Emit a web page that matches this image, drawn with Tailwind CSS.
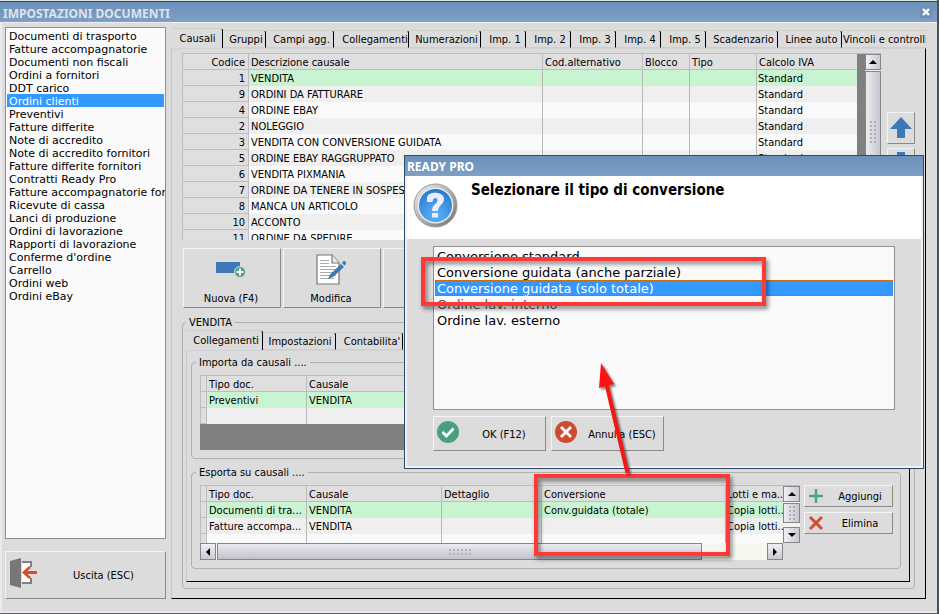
<!DOCTYPE html>
<html lang="it">
<head>
  <meta charset="UTF-8" />
  <meta name="viewport" content="width=device-width, initial-scale=1.0" />
  <title>Impostazioni documenti</title>
  <script src="https://cdn.jsdelivr.net/npm/@tailwindcss/browser@4"></script>
</head>
<body class="relative bg-[#dcdcdc] font-['DejaVu_Sans_Condensed','DejaVu_Sans',sans-serif] text-[11px] leading-4 text-black overflow-x-hidden">

  <!-- Finestra principale -->
  <div class="h-0.5 bg-[#dfe3e0] border-b border-[#34495c]"></div>
  <header class="h-5 px-[3px] flex items-center justify-between bg-linear-to-b from-[#6b90ba] to-[#7f9fc5]">
    <h1 class="pt-1 font-['Noto_Sans',sans-serif] font-bold text-[12px] text-[#dfe3ea]">IMPOSTAZIONI DOCUMENTI</h1>
    <button aria-label="Chiudi" class="size-3 mr-1 flex items-center justify-center bg-[#6f8fb5]">
      <svg class="size-2" viewBox="0 0 8 8"><path d="M1 1l6 6M7 1l-6 6" stroke="#fff" stroke-width="2.4" /></svg>
    </button>
  </header>

  <main class="flex gap-[5px] pl-[3px] pr-[11px] pb-3 border-t border-t-[#f2f2f2] border-x-2 border-b-2 border-x-[#ebebee] border-b-[#ebebee]">

    <!-- Tipi di documento -->
    <aside class="w-[161px] shrink-0 pt-1 flex flex-col gap-3">
      <ul id="documenti" role="listbox" aria-label="Documenti" class="flex-1 pt-px px-px overflow-hidden bg-[#fafafa] border border-[#8f8f8f] font-['DejaVu_Sans',sans-serif] leading-[13px] whitespace-nowrap"></ul>
      <button class="h-12 flex items-center pl-1 bg-[#dcdcdc] border border-t-[#f4f4f4] border-l-[#f4f4f4] border-r-[#8a8a8a] border-b-[#8a8a8a]">
        <svg class="w-7 h-8 -mt-1" viewBox="0 0 28 32">
          <path d="M12 5h9v5M12 26h9v-5" fill="none" stroke="#808080" stroke-width="2" />
          <path d="M12 6h8v19h-8z" fill="#fff" />
          <path d="M0 4l11-3v30L0 28z" fill="#777" />
          <path d="M27 15.500H15M20 10l-6 5.500 6 5.500" fill="none" stroke="#d24e32" stroke-width="2.800" />
        </svg>
        <span class="flex-1 pt-0.5 pl-1 text-center">Uscita (ESC)</span>
      </button>
    </aside>

    <section class="flex-1 min-w-0 pt-[5px]">
      <!-- Schede -->
      <div role="tablist" class="h-5 flex items-end overflow-hidden whitespace-nowrap">
        <button role="tab" aria-selected="true" class="w-[52px] h-5 pt-px pl-0.5 shrink-0 border-t border-t-[#cfcfcf] border-r border-r-black rounded-t-[3px]">Causali</button>
        <button role="tab" class="w-[43px] h-[18px] pt-px pl-1 shrink-0 border-y border-y-[#cfcfcf] border-r border-r-black rounded-tr-[3px]">Gruppi</button>
        <button role="tab" class="w-[68px] h-[18px] pt-px pl-1 shrink-0 border-y border-y-[#cfcfcf] border-r border-r-black rounded-tr-[3px]">Campi agg.</button>
        <button role="tab" class="w-[75px] h-[18px] pt-px pl-2 shrink-0 border-y border-y-[#cfcfcf] border-r border-r-black rounded-tr-[3px]">Collegamenti</button>
        <button role="tab" class="w-[72px] h-[18px] pt-px pl-1 shrink-0 border-y border-y-[#cfcfcf] border-r border-r-black rounded-tr-[3px]">Numerazioni</button>
        <button role="tab" class="w-[45px] h-[18px] pt-px pl-1 shrink-0 border-y border-y-[#cfcfcf] border-r border-r-black rounded-tr-[3px]">Imp. 1</button>
        <button role="tab" class="w-[45px] h-[18px] pt-px pl-1 shrink-0 border-y border-y-[#cfcfcf] border-r border-r-black rounded-tr-[3px]">Imp. 2</button>
        <button role="tab" class="w-[45px] h-[18px] pt-px pl-1 shrink-0 border-y border-y-[#cfcfcf] border-r border-r-black rounded-tr-[3px]">Imp. 3</button>
        <button role="tab" class="w-[45px] h-[18px] pt-px pl-1 shrink-0 border-y border-y-[#cfcfcf] border-r border-r-black rounded-tr-[3px]">Imp. 4</button>
        <button role="tab" class="w-[45px] h-[18px] pt-px pl-1 shrink-0 border-y border-y-[#cfcfcf] border-r border-r-black rounded-tr-[3px]">Imp. 5</button>
        <button role="tab" class="w-[72px] h-[18px] pt-px pl-1 shrink-0 border-y border-y-[#cfcfcf] border-r border-r-black rounded-tr-[3px]">Scadenzario</button>
        <button role="tab" class="w-[64px] h-[18px] pt-px pl-1 shrink-0 border-y border-y-[#cfcfcf] border-r border-r-black rounded-tr-[3px]">Linee auto</button>
        <button role="tab" class="h-[18px] pt-px pl-px shrink-0 border-y border-y-[#cfcfcf]">Vincoli e controlli</button>
      </div>

      <div class="pt-1 px-[10px] pb-[9px] border border-t-[#d2d2d2] border-l-[#c8c8c8] border-r-black border-b-black">

        <!-- Elenco causali -->
        <div class="flex gap-[6px]">
          <div class="flex-1 min-w-0 h-[187px] flex border-t border-[#bdbdc1] overflow-hidden">
            <div class="flex-1 min-w-0 pr-2 bg-[#808080]">
              <table class="w-full table-fixed border-separate border-spacing-0 whitespace-nowrap bg-[#dfdfdf]">
                <colgroup>
                  <col class="w-[67px]" /><col /><col class="w-[100px]" /><col class="w-[47px]" /><col class="w-[67px]" /><col class="w-[100px]" />
                </colgroup>
                <thead>
                  <tr class="h-4">
                    <th class="p-0 pt-0.5 pr-[3px] text-right font-normal leading-[13px] border-x border-b border-[#bdbdc1]">Codice</th>
                    <th class="p-0 pt-0.5 pl-0.5 text-left font-normal leading-[13px] border-r border-b border-[#bdbdc1]">Descrizione causale</th>
                    <th class="p-0 pt-0.5 pl-0.5 text-left font-normal leading-[13px] border-r border-b border-[#bdbdc1]">Cod.alternativo</th>
                    <th class="p-0 pt-0.5 pl-0.5 text-left font-normal leading-[13px] border-r border-b border-[#bdbdc1]">Blocco</th>
                    <th class="p-0 pt-0.5 pl-0.5 text-left font-normal leading-[13px] border-r border-b border-[#bdbdc1]">Tipo</th>
                    <th class="p-0 pt-0.5 pl-0.5 text-left font-normal leading-[13px] border-b border-[#bdbdc1]">Calcolo IVA</th>
                  </tr>
                </thead>
                <tbody id="causali"></tbody>
              </table>
            </div>
            <div class="w-4 flex flex-col bg-[#eeeeea]">
              <button aria-label="Su" class="h-4 flex items-center justify-center bg-linear-to-r from-[#f1f1f4] to-[#c9cad3] border border-[#85868c]">
                <svg class="w-2 h-1" viewBox="0 0 8 4"><path d="M4 0l4 4H0z" /></svg>
              </button>
              <div class="mt-px h-[122px] flex items-center justify-center bg-linear-to-r from-[#ececf0] to-[#c6c7d0] border border-[#85868c]">
                <svg class="w-2 h-6" viewBox="0 0 8 24"><path d="M2 1v22M6 1v22" stroke="#b0b0b8" stroke-width="2" stroke-dasharray="2 2" /></svg>
              </div>
            </div>
          </div>
          <div class="w-7 pt-[59px] flex flex-col gap-1">
            <button aria-label="Sposta su" class="h-8 flex items-center justify-center border border-t-[#f4f4f4] border-l-[#f4f4f4] border-r-[#8a8a8a] border-b-[#8a8a8a]">
              <svg class="w-6 h-6" viewBox="0 0 24 24"><path d="M12 1l11 12h-7v9H8v-9H1z" fill="#3d79b9" /></svg>
            </button>
            <button aria-label="Sposta giù" class="h-8 flex items-center justify-center border border-t-[#f4f4f4] border-l-[#f4f4f4] border-r-[#8a8a8a] border-b-[#8a8a8a]">
              <svg class="w-6 h-6" viewBox="0 0 24 24"><path d="M12 23l11-12h-7V0H8v11H1z" fill="#3d79b9" /></svg>
            </button>
          </div>
        </div>

        <!-- Comandi -->
        <div class="mt-2 pl-px flex gap-0.5">
          <button class="w-[98px] h-[60px] pt-2 pr-0.5 flex flex-col items-center gap-[10px] border border-t-[#f4f4f4] border-l-[#f4f4f4] border-r-[#8a8a8a] border-b-[#8a8a8a]">
            <svg class="w-[30px] h-6" viewBox="0 0 30 24">
              <path d="M0 5h24v11H0z" fill="#3d79b9" />
              <circle cx="24" cy="15" r="5.500" fill="#4aa57c" stroke="#dcdcdc" />
              <path d="M24 11.500v7M20.500 15h7" stroke="#fff" stroke-width="2" />
            </svg>
            Nuova (F4)
          </button>
          <button class="w-[98px] h-[60px] pt-1 pr-0.5 flex flex-col items-center gap-[6px] border border-t-[#f4f4f4] border-l-[#f4f4f4] border-r-[#8a8a8a] border-b-[#8a8a8a]">
            <svg class="w-[30px] h-8" viewBox="0 0 30 32">
              <path d="M1 2h15l7 8v21H1z" fill="#fff" stroke="#777" stroke-width="1.200" />
              <path d="M16 2v8h7" fill="#eee" stroke="#777" stroke-width="1.200" />
              <path d="M4 7.500h9M4 10.500h9M4 13.500h16M4 16.500h16M4 19.500h16M4 22.500h16M4 25.500h14" stroke="#aaa" />
              <path d="M14 21.500L25 11l3 3-11 10-5 2z" fill="#3d79b9" />
              <path d="M26 10l2-2.500 2.500 2.500-2 2.500z" fill="#3d79b9" />
            </svg>
            Modifica
          </button>
          <button aria-label="Elimina causale" class="w-[98px] h-[60px] border border-t-[#f4f4f4] border-l-[#f4f4f4] border-r-[#8a8a8a] border-b-[#8a8a8a]"></button>
        </div>

        <!-- Dettaglio causale -->
        <fieldset class="mt-[6px] pl-[3px] pr-1 pb-[6px] border border-[#b0b0b0] rounded-[4px]">
          <legend class="px-[3px] h-4 leading-[18px]">VENDITA</legend>
          <div role="tablist" class="h-5 flex items-end whitespace-nowrap">
            <button role="tab" aria-selected="true" class="w-[77px] h-5 pt-px pl-1 border-t border-t-[#cfcfcf] border-r border-r-black rounded-t-[3px]">Collegamenti</button>
            <button role="tab" class="w-[73px] h-[18px] pt-px pl-0.5 border-y border-y-[#cfcfcf] border-r border-r-black rounded-tr-[3px]">Impostazioni</button>
            <button role="tab" class="w-[67px] h-[18px] pt-px pl-[6px] border-y border-y-[#cfcfcf] border-r border-r-black rounded-tr-[3px]">Contabilita'</button>
          </div>
          <div class="pt-[3px] pl-1 pr-2 pb-3 flex flex-col gap-[5px] border border-t-[#d2d2d2] border-l-[#c8c8c8] border-r-black border-b-black">

            <fieldset class="min-w-0 px-2 pt-[5px] pb-2 border border-[#b0b0b0] rounded-[4px]">
              <legend class="-ml-1 px-[3px] h-4 leading-[18px]">Importa da causali ....</legend>
              <div class="h-[75px] overflow-hidden bg-[#808080] border-t border-[#bdbdc1]">
                <table class="w-full table-fixed border-separate border-spacing-0 whitespace-nowrap bg-[#dfdfdf]">
                  <colgroup>
                    <col class="w-[7px]" /><col class="w-[100px]" /><col class="w-[135px]" /><col />
                  </colgroup>
                  <thead>
                    <tr class="h-4">
                      <th class="p-0 border-x border-b border-[#bdbdc1]"></th>
                      <th class="p-0 pt-0.5 pl-0.5 text-left font-normal leading-[13px] border-r border-b border-[#bdbdc1]">Tipo doc.</th>
                      <th class="p-0 pt-0.5 pl-0.5 text-left font-normal leading-[13px] border-r border-b border-[#bdbdc1]">Causale</th>
                      <th class="p-0 border-b border-[#bdbdc1]"></th>
                    </tr>
                  </thead>
                  <tbody>
                    <tr class="h-4 bg-[#c9f4d1]">
                      <td class="p-0 bg-[#dfdfdf] border-x border-b border-[#bdbdc1]"></td>
                      <td class="p-0 pt-0.5 pl-0.5 leading-[14px] border-r border-[#b8b8b8]">Preventivi</td>
                      <td class="p-0 pt-0.5 pl-0.5 leading-[14px] border-r border-[#b8b8b8]">VENDITA</td>
                      <td class="p-0"></td>
                    </tr>
                    <tr class="h-4 bg-[#efefef]">
                      <td class="p-0 bg-[#dfdfdf] border-x border-b border-[#bdbdc1]"></td>
                      <td class="p-0 border-r border-[#b8b8b8]"></td>
                      <td class="p-0 border-r border-[#b8b8b8]"></td>
                      <td class="p-0"></td>
                    </tr>
                  </tbody>
                </table>
              </div>
            </fieldset>

            <fieldset class="min-w-0 pl-2 pr-[7px] pt-[5px] pb-2 border border-[#b0b0b0] rounded-[4px]">
              <legend class="-ml-1 px-[3px] h-4 leading-[18px]">Esporta su causali ....</legend>
              <div class="flex gap-1">
                <div class="flex-1 min-w-0 h-[75px] border-t border-[#bdbdc1]">
                  <div class="h-[57px] flex overflow-hidden">
                    <div class="flex-1 min-w-0 bg-[#fafafa]">
                      <table class="w-full table-fixed border-separate border-spacing-0 whitespace-nowrap bg-[#dfdfdf]">
                        <colgroup>
                          <col class="w-[7px]" /><col class="w-[100px]" /><col class="w-[135px]" /><col class="w-[100px]" /><col /><col class="w-[57px]" />
                        </colgroup>
                        <thead>
                          <tr class="h-4">
                            <th class="p-0 border-x border-b border-[#bdbdc1]"></th>
                            <th class="p-0 pt-0.5 pl-0.5 text-left font-normal leading-[13px] border-r border-b border-[#bdbdc1]">Tipo doc.</th>
                            <th class="p-0 pt-0.5 pl-0.5 text-left font-normal leading-[13px] border-r border-b border-[#bdbdc1]">Causale</th>
                            <th class="p-0 pt-0.5 pl-0.5 text-left font-normal leading-[13px] border-r border-b border-[#bdbdc1]">Dettaglio</th>
                            <th class="p-0 pt-0.5 pl-0.5 text-left font-normal leading-[13px] border-r border-b border-[#bdbdc1]">Conversione</th>
                            <th class="p-0 pt-0.5 pl-px text-left font-normal leading-[13px] border-b border-[#bdbdc1]">Lotti e ma..</th>
                          </tr>
                        </thead>
                        <tbody id="esporta"></tbody>
                      </table>
                    </div>
                    <div class="w-[17px] flex flex-col bg-[#f3f3ee]">
                      <button aria-label="Su" class="h-4 flex items-center justify-center bg-linear-to-r from-[#f1f1f4] to-[#c9cad3] border border-[#85868c]">
                        <svg class="w-2 h-1" viewBox="0 0 8 4"><path d="M4 0l4 4H0z" /></svg>
                      </button>
                      <div class="mt-px h-5 flex items-center justify-center bg-linear-to-r from-[#ececf0] to-[#c6c7d0] border border-[#85868c]">
                        <svg class="w-2 h-4" viewBox="0 0 8 16"><path d="M2 1v14M6 1v14" stroke="#b0b0b8" stroke-width="2" stroke-dasharray="2 2" /></svg>
                      </div>
                      <button aria-label="Giù" class="mt-auto h-4 flex items-center justify-center bg-linear-to-r from-[#f1f1f4] to-[#c9cad3] border border-[#85868c]">
                        <svg class="w-2 h-1" viewBox="0 0 8 4"><path d="M0 0h8L4 4z" /></svg>
                      </button>
                    </div>
                  </div>
                  <div class="h-[17px] flex pr-[17px]">
                    <div class="flex-1 flex bg-[#f7f7f0]">
                      <button aria-label="Sinistra" class="w-4 flex items-center justify-center bg-linear-to-b from-[#f1f1f4] to-[#c9cad3] border border-[#85868c]">
                        <svg class="w-1 h-2" viewBox="0 0 4 8"><path d="M4 0v8L0 4z" /></svg>
                      </button>
                      <div class="ml-px w-[485px] flex items-center justify-center bg-linear-to-b from-[#ececf0] to-[#c0c1ca] border border-[#85868c]">
                        <svg class="w-6 h-2" viewBox="0 0 24 8"><path d="M1 2h22M1 6h22" stroke="#b0b0b8" stroke-width="2" stroke-dasharray="2 2" /></svg>
                      </div>
                      <button aria-label="Destra" class="ml-auto w-4 flex items-center justify-center bg-linear-to-b from-[#f1f1f4] to-[#c9cad3] border border-[#85868c]">
                        <svg class="w-1 h-2" viewBox="0 0 4 8"><path d="M0 0v8l4-4z" /></svg>
                      </button>
                    </div>
                  </div>
                </div>
                <div class="w-[89px] flex flex-col gap-[5px]">
                  <button class="h-[22px] flex items-center pl-[3px] border border-t-[#f4f4f4] border-l-[#f4f4f4] border-r-[#8a8a8a] border-b-[#8a8a8a]">
                    <svg class="size-4" viewBox="0 0 16 16"><path d="M8 1v14M1 8h14" stroke="#4aa57c" stroke-width="2.500" /></svg>
                    <span class="flex-1 pt-0.5 pl-1">Aggiungi</span>
                  </button>
                  <button class="h-[22px] flex items-center pl-[3px] border border-t-[#f4f4f4] border-l-[#f4f4f4] border-r-[#8a8a8a] border-b-[#8a8a8a]">
                    <svg class="size-4" viewBox="0 0 16 16"><path d="M2 2l12 12M14 2L2 14" stroke="#d24e32" stroke-width="3" /></svg>
                    <span class="flex-1 pt-0.5 pl-1">Elimina</span>
                  </button>
                </div>
              </div>
            </fieldset>
          </div>
        </fieldset>
      </div>
    </section>
  </main>
  <div class="h-0.5 bg-[#5a5f68]"></div>
  <div class="absolute top-0 right-0 bottom-0 w-0.5 bg-[#4a525c]"></div>

  <!-- Finestra di scelta conversione -->
  <div role="dialog" aria-labelledby="dlgTitolo" class="absolute left-[404px] top-[155px] w-[520px] bg-[#dcdcdc] border border-[#2f4a66]">
    <h2 id="dlgTitolo" class="h-5 pl-0.5 pt-[3px] leading-4 font-['Noto_Sans',sans-serif] font-bold text-[12px] text-white bg-linear-to-b from-[#6b90ba] to-[#7f9fc5]">READY PRO</h2>
    <div class="border-x-2 border-b-2 border-[#f0f2f5]">
      <div class="h-[63px] pt-[7px] pl-[6px] flex gap-[13px] bg-white">
        <svg class="size-[45px]" viewBox="0 0 45 45">
          <defs>
            <linearGradient id="anello" x1="0" y1="0" x2="1" y2="1"><stop offset="0" stop-color="#f2f2f2" /><stop offset="1" stop-color="#6e6e6e" /></linearGradient>
            <radialGradient id="blu" cx=".5" cy=".8" r=".8"><stop offset="0" stop-color="#5cb4f5" /><stop offset="1" stop-color="#2a78d2" /></radialGradient>
          </defs>
          <circle cx="22.500" cy="22.500" r="21.500" fill="url(#anello)" stroke="#999" />
          <circle cx="22.500" cy="22.500" r="18" fill="#e6e9ee" />
          <circle cx="22.500" cy="22.500" r="16.500" fill="url(#blu)" />
          <path d="M14 19v-4c0-7 17-7 17 1 0 6-6 6-6 12h-6c0-7 5.500-7 5.500-11 0-3-5-3-5 2z" fill="#ececfa" />
          <path d="M19 30h6v4.500h-6z" fill="#ececfa" />
        </svg>
        <p class="-mt-[3px] font-bold text-[15px] leading-5">Selezionare il tipo di conversione</p>
      </div>
      <div class="pt-[7px] px-[26px] pb-[15px]">
        <ul role="listbox" aria-label="Tipo di conversione" class="h-[164px] p-px bg-[#fafafa] border border-[#8f8f8f] font-['DejaVu_Sans',sans-serif] text-[13px] leading-[14px]">
          <li role="option" class="h-4 pt-0.5 pl-0.5">Conversione standard</li>
          <li role="option" class="h-4 pt-0.5 pl-0.5">Conversione guidata (anche parziale)</li>
          <li role="option" aria-selected="true" class="h-4 pt-0.5 pl-0.5 bg-[#3399ff] text-white outline outline-dotted -outline-offset-1 outline-[#cc6600]">Conversione guidata (solo totale)</li>
          <li role="option" class="h-4 pt-0.5 pl-0.5 text-[#555]">Ordine lav. interno</li>
          <li role="option" class="h-4 pt-0.5 pl-0.5">Ordine lav. esterno</li>
        </ul>
        <div class="mt-[6px] flex gap-[5px]">
          <button class="w-[113px] h-[35px] pl-[3px] flex items-center border border-t-[#f4f4f4] border-l-[#f4f4f4] border-r-[#8a8a8a] border-b-[#8a8a8a]">
            <svg class="size-[22px] -mt-1" viewBox="0 0 22 22"><circle cx="11" cy="11" r="11" fill="#4b9f7d" /><path d="M5.500 11l4 4 7-7.500" fill="none" stroke="#fff" stroke-width="2.800" /></svg>
            <span class="flex-1 pt-0.5 pl-1">OK (F12)</span>
          </button>
          <button class="w-[113px] h-[35px] pl-[3px] flex items-center border border-t-[#f4f4f4] border-l-[#f4f4f4] border-r-[#8a8a8a] border-b-[#8a8a8a]">
            <svg class="size-[22px] -mt-1" viewBox="0 0 22 22"><circle cx="11" cy="11" r="11" fill="#cf4a31" /><path d="M6 6l10 10M16 6L6 16" stroke="#fff" stroke-width="2.800" /></svg>
            <span class="flex-1 pt-0.5 pl-1">Annulla (ESC)</span>
          </button>
        </div>
      </div>
    </div>
  </div>

  <!-- Evidenziazioni -->
  <div class="absolute left-[421px] top-[257px] w-[345px] h-[49px] border-4 border-[#ff3838] drop-shadow-[2px_3px_2px_rgba(0,0,0,0.5)]"></div>
  <div class="absolute left-[534px] top-[474px] w-[196px] h-[82px] border-4 border-[#ff3838] drop-shadow-[2px_3px_2px_rgba(0,0,0,0.5)]"></div>
  <svg class="absolute left-[590px] top-[360px] w-[50px] h-[120px] drop-shadow-[2px_2px_1px_rgba(0,0,0,0.5)]" viewBox="0 0 50 120">
    <path d="M37.500 113L16 22" stroke="#fa1414" stroke-width="4" />
    <path d="M11 3l13 21-15 4z" fill="#fa1414" />
  </svg>

  <script>
    const documenti = [
      'Documenti di trasporto', 'Fatture accompagnatorie', 'Documenti non fiscali', 'Ordini a fornitori',
      'DDT carico', 'Ordini clienti', 'Preventivi', 'Fatture differite', 'Note di accredito',
      'Note di accredito fornitori', 'Fatture differite fornitori', 'Contratti Ready Pro',
      'Fatture accompagnatorie fornitori', 'Ricevute di cassa', 'Lanci di produzione', 'Ordini di lavorazione',
      'Rapporti di lavorazione', "Conferme d'ordine", 'Carrello', 'Ordini web', 'Ordini eBay'
    ];
    const causali = [
      [1, 'VENDITA'], [9, 'ORDINI DA FATTURARE'], [4, 'ORDINE EBAY'], [2, 'NOLEGGIO'],
      [3, 'VENDITA CON CONVERSIONE GUIDATA'], [5, 'ORDINE EBAY RAGGRUPPATO'], [6, 'VENDITA PIXMANIA'],
      [7, 'ORDINE DA TENERE IN SOSPESO'], [8, 'MANCA UN ARTICOLO'], [10, 'ACCONTO'], [11, 'ORDINE DA SPEDIRE']
    ];
    const esporta = [
      ['Documenti di tra...', 'VENDITA', '', 'Conv.guidata (totale)', 'Copia lotti..'],
      ['Fatture accompa...', 'VENDITA', '', '', 'Copia lotti..'],
      ['', '', '', '', '']
    ];

    // riga selezionata verde, le altre alternate
    function sfondo(i) {
      if (i === 0) return 'bg-[#c9f4d1]';
      return i % 2 ? 'bg-[#efefef]' : 'bg-[#fafafa]';
    }

    function cella(testo) {
      return `<td class="p-0 pt-0.5 pl-0.5 leading-[14px] border-r border-[#b8b8b8] last:border-r-0 last:pl-px">${testo}</td>`;
    }

    document.getElementById('documenti').innerHTML = documenti.map(d => {
      const attivo = d === 'Ordini clienti';
      return `<li role="option" aria-selected="${attivo}" class="h-[13px] pt-px pl-0.5 ${attivo ? 'bg-[#3399ff] text-white' : ''}">${d}</li>`;
    }).join('');

    document.getElementById('causali').innerHTML = causali.map(([codice, nome], i) => `
      <tr class="h-4 ${sfondo(i)}">
        <td class="p-0 pt-0.5 pr-[3px] text-right leading-[13px] bg-[#dfdfdf] border-x border-b border-[#bdbdc1]">${codice}</td>
        ${[nome, '', '', '', 'Standard'].map(cella).join('')}
      </tr>`).join('');

    document.getElementById('esporta').innerHTML = esporta.map((riga, i) => `
      <tr class="h-4 ${sfondo(i)}">
        <td class="p-0 bg-[#dfdfdf] border-x border-b border-[#bdbdc1]"></td>
        ${riga.map(cella).join('')}
      </tr>`).join('');
  </script>
</body>
</html>
